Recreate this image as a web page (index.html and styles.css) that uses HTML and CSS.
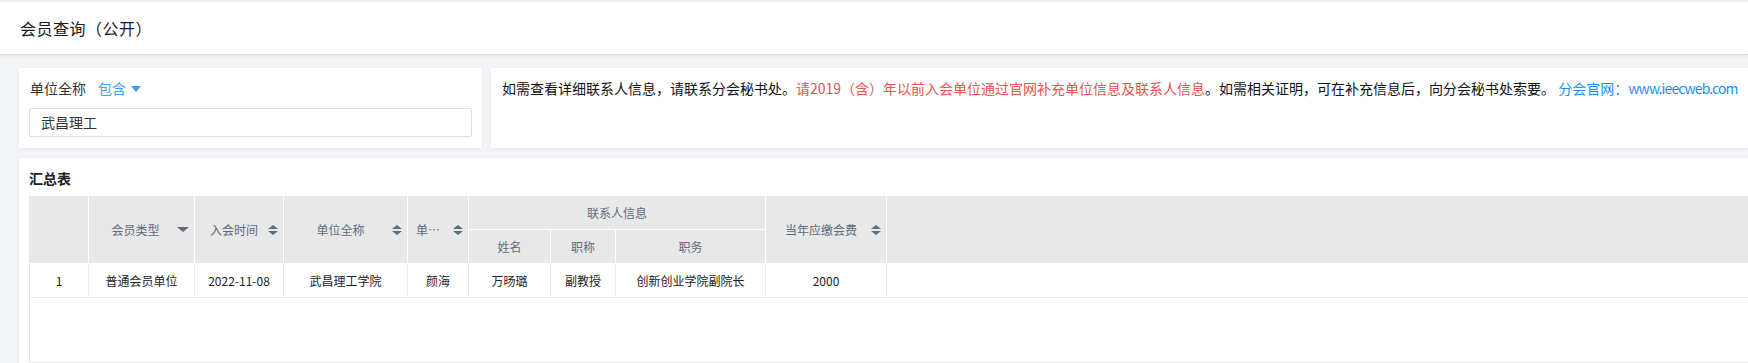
FILE: index.html
```html
<!DOCTYPE html>
<html lang="zh-CN">
	<head>
		<meta charset="utf-8">
		<title>会员查询（公开）</title>
		<link rel="stylesheet" href="styles.css">
	</head>
	<body>

		<div class="topbar">
			<h1 class="page-title">会员查询（公开）</h1>
		</div>

		<div class="main">

			<div class="row">
				<div class="card search">
					<div class="search__label">
						<span>单位全称</span>
						<span class="search__mode">包含<i class="caret-down"></i></span>
					</div>
					<div class="search__input">武昌理工</div>
				</div>

				<div class="card notice">
					如需查看详细联系人信息，请联系分会秘书处。<span class="notice__red">请2019（含）年以前入会单位通过官网补充单位信息及联系人信息</span>。如需相关证明，可在补充信息后，向分会秘书处索要。 <span class="notice__link">分会官网：<span class="notice__url">www.ieecweb.com</span></span>
				</div>
			</div>

			<div class="card summary">
				<div class="summary__title">汇总表</div>

				<div class="grid-wrap">
					<div class="grid">
						<!-- header -->
						<div class="th span2"></div>
						<div class="th span2 sortable"><span class="th__text">会员类型</span><i class="filter"></i></div>
						<div class="th span2 sortable"><span class="th__text">入会时间</span><i class="sort"></i></div>
						<div class="th span2 sortable"><span class="th__text">单位全称</span><i class="sort"></i></div>
						<div class="th span2 sortable narrow"><span class="th__text">单位负责人</span><i class="sort"></i></div>
						<div class="th group">联系人信息</div>
						<div class="th span2 sortable"><span class="th__text">当年应缴会费</span><i class="sort"></i></div>
						<div class="th span2 last"></div>
						<div class="th">姓名</div>
						<div class="th">职称</div>
						<div class="th">职务</div>

						<!-- rows -->
						<div class="td">1</div>
						<div class="td">普通会员单位</div>
						<div class="td">2022-11-08</div>
						<div class="td">武昌理工学院</div>
						<div class="td">颜海</div>
						<div class="td">万旸璐</div>
						<div class="td">副教授</div>
						<div class="td">创新创业学院副院长</div>
						<div class="td">2000</div>
						<div class="td last"></div>
					</div>
				</div>
			</div>

		</div>

	</body>
</html>
```

FILE: styles.css
```css
* {
	box-sizing: border-box;
}

body {
	margin: 0;
	padding-top: 2px;
	background-color: #f3f4f8;
	font-family: "Noto Sans CJK SC", "Microsoft YaHei", sans-serif;
	font-size: 14px;
	color: #333;
	overflow: hidden;
}

.topbar {
	height: 53px;
	background: #fff;
	border-bottom: 1px solid #dcdcdc;
	box-shadow: 0 1px 3px rgba(0, 0, 0, .08);
	padding-left: 20px;
	display: flex;
	align-items: center;
}

.page-title {
	margin: 0;
	font-size: 16px;
	font-weight: normal;
	color: #1a1a1a;
	letter-spacing: .5px;
	line-height: 20px;
}

.main {
	padding: 13px 0 0 19px;
}

.row {
	display: flex;
	gap: 9px;
	margin-bottom: 10px;
}

.card {
	background: #fff;
	box-shadow: 0 1px 4px rgba(0, 0, 0, .06);
}

/* search */

.search {
	flex: none;
	width: 463px;
	height: 80px;
	padding: 10px 10px 0 10px;
}

.search__label {
	display: flex;
	align-items: center;
	height: 20px;
	line-height: 20px;
	padding-left: 1px;
	margin-bottom: 10px;
}

.search__mode {
	color: #409eff;
	margin-left: 12px;
	display: flex;
	align-items: center;
}

.caret-down {
	display: inline-block;
	width: 0;
	height: 0;
	margin-left: 5px;
	margin-top: 1px;
	border-left: 5px solid transparent;
	border-right: 5px solid transparent;
	border-top: 6px solid #409eff;
}

.search__input {
	height: 29px;
	border: 1px solid #dcdfe6;
	border-radius: 2px;
	padding-left: 11px;
	line-height: 27px;
	color: #333;
}

/* notice */

.notice {
	flex: 1;
	height: 80px;
	padding: 10px 0 0 11px;
	line-height: 20px;
	color: #111;
	white-space: nowrap;
}

.notice__red {
	color: #ee5050;
}

.notice__link {
	color: #1890ff;
}

.notice__url {
	letter-spacing: -.9px;
}

/* table */

.summary {
	padding: 10px 0 0 10px;
	height: 220px;
}

.summary__title {
	font-weight: bold;
	line-height: 20px;
	color: #222;
	margin-bottom: 8px;
}

.grid-wrap {
	height: 167px;
	border-left: 1px solid #e6e6e6;
	border-bottom: 1px solid #e6e6e6;
}

.grid {
	display: grid;
	grid-template-columns: 59px 106px 89px 124px 61px 82px 65px 150px 121px 1fr;
	grid-template-rows: 34px 34px 34px;
	font-size: 12px;
}

.th {
	background: #e8e8e8;
	color: #5c6b7f;
	border-right: 1px solid #fff;
	border-bottom: 1px solid #fff;
	display: flex;
	align-items: center;
	justify-content: center;
	white-space: nowrap;
}

.span2 {
	grid-row: span 2;
}

.group {
	grid-column: span 3;
}

.last {
	border-right: none;
}

.sortable {
	padding: 0 5px;
}

.th__text {
	flex: 1;
	text-align: center;
	overflow: hidden;
	text-overflow: ellipsis;
}

.narrow {
	padding-left: 8px;
}

.narrow .th__text {
	text-align: left;
	margin-right: 8px;
}

.sort {
	flex: none;
	width: 10px;
	height: 10px;
	position: relative;
}

.sort::before,
.sort::after {
	content: "";
	position: absolute;
	left: 0;
	border-left: 5px solid transparent;
	border-right: 5px solid transparent;
}

.sort::before {
	top: 0;
	border-bottom: 4px solid #5c6b7f;
}

.sort::after {
	bottom: 0;
	border-top: 4px solid #5c6b7f;
}

.filter {
	flex: none;
	width: 0;
	height: 0;
	border-left: 6px solid transparent;
	border-right: 6px solid transparent;
	border-top: 5px solid #5c6b7f;
}

.td {
	background: #fff;
	color: #222;
	border-right: 1px solid #ebebeb;
	border-bottom: 1px solid #ebebeb;
	display: flex;
	align-items: center;
	justify-content: center;
	white-space: nowrap;
}

.td.last {
	border-right: none;
}
```
